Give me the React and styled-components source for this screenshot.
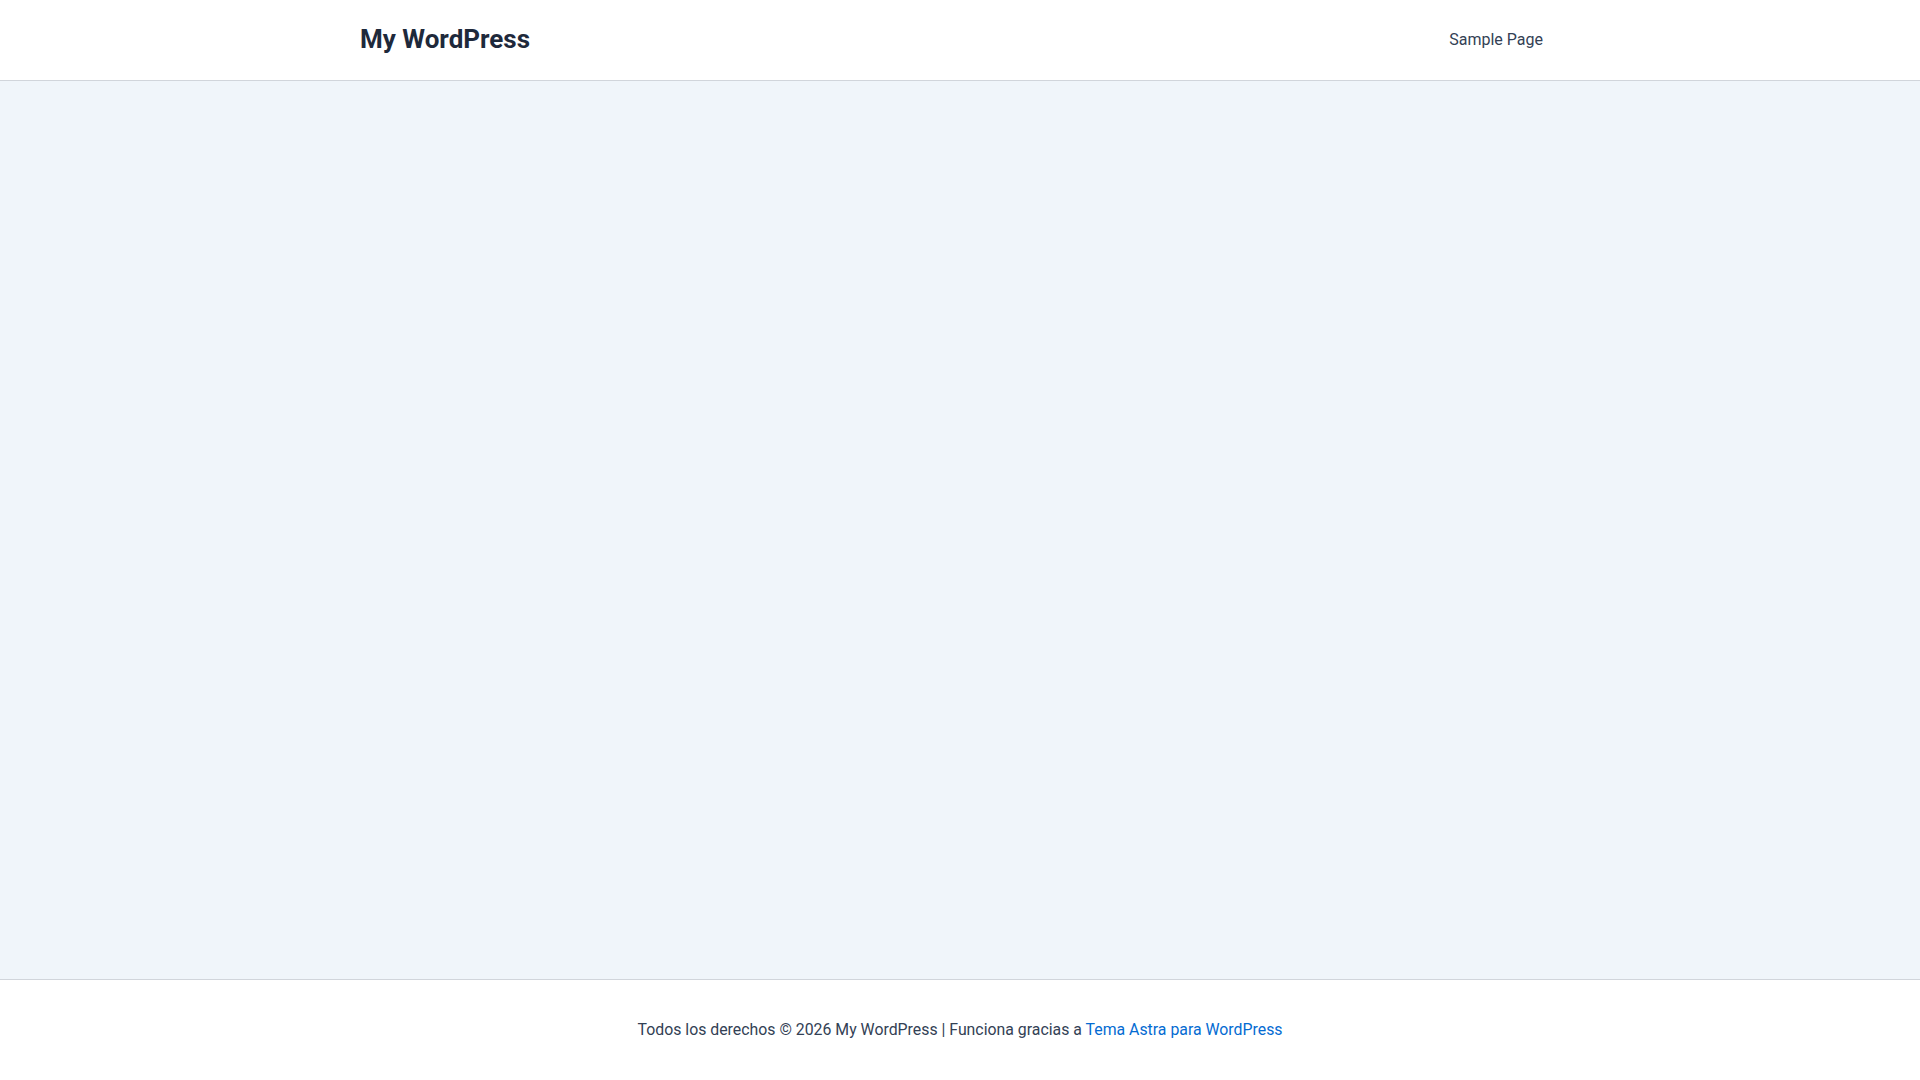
import React from 'react';
import styled, { createGlobalStyle } from 'styled-components';

const GlobalStyle = createGlobalStyle`
  html, body {
    margin: 0;
    padding: 0;
  }
  body {
    font-family: Roboto, "Liberation Sans", sans-serif;
    color: #334155;
    background: #f0f5fa;
    -webkit-font-smoothing: antialiased;
  }
`;

const Page = styled.div`
  display: flex;
  flex-direction: column;
  min-height: 100vh;
`;

const Header = styled.header`
  background: #ffffff;
  border-bottom: 1px solid #d1d5db;
`;

const HeaderInner = styled.div`
  max-width: 1200px;
  height: 80px;
  margin: 0 auto;
  display: flex;
  align-items: center;
  justify-content: space-between;
`;

const SiteTitle = styled.a`
  font-size: 26px;
  font-weight: 700;
  line-height: 1;
  color: #1e293b;
  text-decoration: none;
  margin-top: -2px;
`;

const Nav = styled.nav`
  display: flex;
  align-items: center;
  height: 100%;
`;

const NavLink = styled.a`
  font-size: 16px;
  color: #334155;
  text-decoration: none;
  padding: 0 17px 0 16px;
  margin-top: -2px;
`;

const Main = styled.main`
  flex: 1 1 auto;
  background: #f0f5fa;
`;

const Footer = styled.footer`
  background: #ffffff;
  border-top: 1px solid #d1d5db;
  height: 100px;
  display: flex;
  align-items: center;
  justify-content: center;
`;

const Copy = styled.p`
  margin: 0;
  font-size: 15.85px;
  color: #334155;
  line-height: 1.6;
`;

const FooterLink = styled.a`
  color: #046bd2;
  text-decoration: none;
`;

const App = () => {
  return (
    <Page>
      <GlobalStyle />
      <Header>
        <HeaderInner>
          <SiteTitle href="#">My WordPress</SiteTitle>
          <Nav>
            <NavLink href="#">Sample Page</NavLink>
          </Nav>
        </HeaderInner>
      </Header>
      <Main />
      <Footer>
        <Copy>
          Todos los derechos © 2026 My WordPress | Funciona gracias a{' '}
          <FooterLink href="#">Tema Astra para WordPress</FooterLink>
        </Copy>
      </Footer>
    </Page>
  );
};

export default App;
